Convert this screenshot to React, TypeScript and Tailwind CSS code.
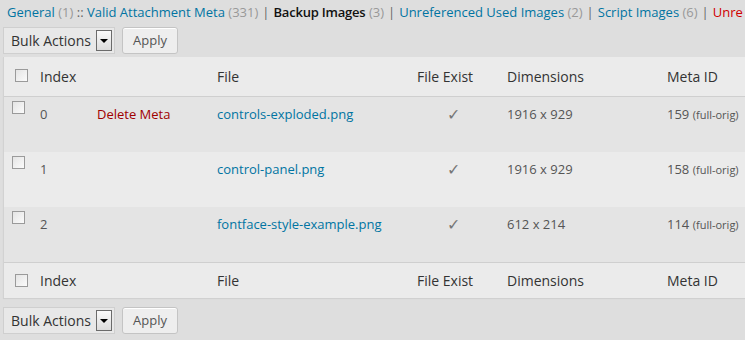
import React from "react";

const rows = [
  { index: "0", del: true, file: "controls-exploded.png", dims: "1916 x 929", meta: "159" },
  { index: "1", del: false, file: "control-panel.png", dims: "1916 x 929", meta: "158" },
  { index: "2", del: false, file: "fontface-style-example.png", dims: "612 x 214", meta: "114" },
];

const cols = "grid grid-cols-[29px_57px_120px_200px_90px_160px_1fr]";

function Box({ className = "" }: { className?: string }) {
  return (
    <span
      className={`block w-[13px] h-[13px] border border-[#9a9a9a] bg-gradient-to-br from-[#e4e4e4] to-[#fbfbfb] ${className}`}
    />
  );
}

function Sep() {
  return <span className="mx-[4px] text-[#666]">|</span>;
}

function Controls() {
  return (
    <div className="flex items-center gap-[7px] pl-[3px]">
      <div className="flex items-center h-[27px] w-[112px] border border-[#cfcfcf] bg-[#e8e8e8] pl-[7px] pr-[2px]">
        <span className="text-[14px] text-[#333] flex-1">Bulk Actions</span>
        <span className="flex items-center justify-center w-[16px] h-[21px] border border-[#6b6b6b] bg-gradient-to-b from-[#fafafa] to-[#dcdcdc]">
          <span className="w-0 h-0 border-l-[4px] border-r-[4px] border-t-[4px] border-l-transparent border-r-transparent border-t-black" />
        </span>
      </div>
      <button className="h-[27px] w-[56px] rounded-[3px] border border-[#c4c4c4] bg-[#eeeeee] text-[13px] text-[#555] shadow-[inset_0_1px_0_#fff]">
        Apply
      </button>
    </div>
  );
}

function HeadRow({ top }: { top?: boolean }) {
  return (
    <div
      className={`${cols} bg-[#ebebeb] text-[14px] text-[#333] ${
        top ? "h-[40px] pt-[10px] border-b border-[#cfcfcf]" : "h-[36px] pt-[8px] border-t border-[#cfcfcf]"
      }`}
    >
      <div className={`pl-[11px] ${top ? "pt-[2px]" : "pt-[3px]"}`}>
        <Box />
      </div>
      <div className="pl-[7px] leading-[20px]">Index</div>
      <div />
      <div className="pl-[7px] leading-[20px]">File</div>
      <div className="pl-[7px] leading-[20px]">File Exist</div>
      <div className="pl-[7px] leading-[20px]">Dimensions</div>
      <div className="pl-[7px] leading-[20px]">Meta ID</div>
    </div>
  );
}

export default function App() {
  return (
    <div
      className="w-[745px] h-[340px] overflow-hidden bg-[#dedede] text-[13px]"
      style={{ fontFamily: '"Open Sans", sans-serif' }}
    >
      <div className="h-[27px] pl-[7px] pt-[3px] leading-[18px] whitespace-nowrap text-[#666]">
        <a className="text-[#0074a2]">General</a> <span className="text-[#999]">(1)</span> ::{" "}
        <a className="text-[#0074a2]">Valid Attachment Meta</a> <span className="text-[#999]">(331)</span>
        <Sep />
        <span className="text-[#111] font-semibold tracking-[-0.2px]">Backup Images</span>{" "}
        <span className="text-[#999]">(3)</span>
        <Sep />
        <a className="text-[#0074a2]">Unreferenced Used Images</a> <span className="text-[#999]">(2)</span>
        <Sep />
        <a className="text-[#0074a2]">Script Images</a> <span className="text-[#999]">(6)</span>
        <Sep />
        <a className="text-[#d00000]">Unre</a>
      </div>

      <Controls />

      <div className="mt-[3px] ml-[3px] w-[820px] border-l border-[#d2d2d2] shadow-[0_1px_1px_rgba(0,0,0,0.06)]">
        <HeadRow top />
        {rows.map((r, i) => (
          <div
            key={r.index}
            className={`${cols} h-[55px] pt-[8px] leading-[18px] text-[#555] ${
              i % 2 === 0 ? "bg-[#e4e4e4]" : "bg-[#ebebeb]"
            }`}
          >
            <div className="pl-[8px] -mt-[4px]">
              <Box />
            </div>
            <div className="pl-[7px]">{r.index}</div>
            <div className="pl-[7px]">{r.del && <a className="text-[#a00000]">Delete Meta</a>}</div>
            <div className="pl-[7px]">
              <a className="text-[#0074a2]">{r.file}</a>
            </div>
            <div className="pl-[37px] text-[16px] leading-[18px] font-light text-[#777]">✓</div>
            <div className="pl-[7px]">{r.dims}</div>
            <div className="pl-[7px] whitespace-nowrap">
              {r.meta} <span className="text-[11px]">(full-orig)</span>
            </div>
          </div>
        ))}
        <HeadRow />
      </div>

      <div className="mt-[9px]">
        <Controls />
      </div>
    </div>
  );
}
